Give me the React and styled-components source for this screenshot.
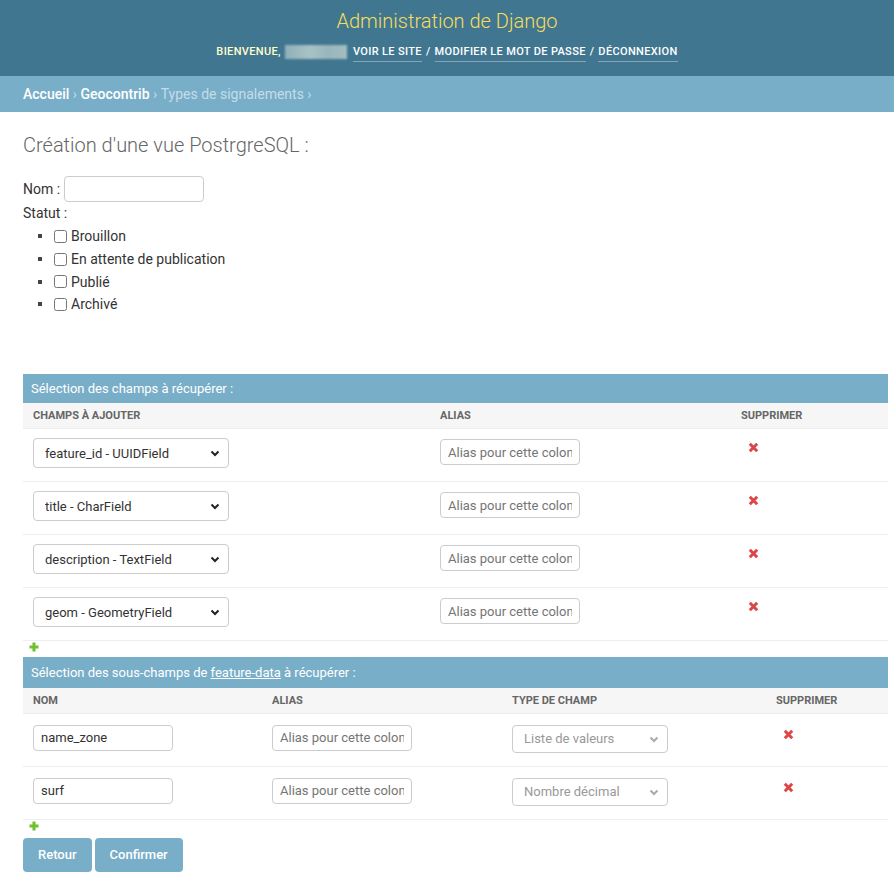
import React from 'react'
import styled, { createGlobalStyle } from 'styled-components'

const GlobalStyle = createGlobalStyle`
  body {
    margin: 0;
    font-family: Roboto, "Liberation Sans", Arial, sans-serif;
    font-size: 14px;
    color: #333;
    background: #fff;
  }
`

const Header = styled.div`
  height: 76px;
  box-sizing: border-box;
  background: #417690;
  padding-top: 9px;
  display: flex;
  flex-direction: column;
  align-items: center;
`

const Branding = styled.h1`
  margin: 0;
  font-size: 20px;
  line-height: 24px;
  font-weight: 300;
  color: #f5dd5d;
`

const UserTools = styled.div`
  margin-top: 9px;
  display: flex;
  align-items: center;
  font-size: 11px;
  letter-spacing: 0.35px;
  text-transform: uppercase;
  color: #ffc;
  font-weight: 500;
  line-height: 14px;
`

const BlurName = styled.span`
  display: inline-block;
  width: 62px;
  height: 14px;
  margin: 0 6px 0 4px;
  background: linear-gradient(90deg, #8fb0b8, #a9c3c4 40%, #98b5bb 70%, #a3bfc2);
  filter: blur(1px);
`

const ToolLink = styled.a`
  color: #fff;
  text-decoration: none;
  border-bottom: 1px solid rgba(255, 255, 255, 0.35);
  padding-bottom: 2px;
  margin-top: 3px;
`

const Sep = styled.span`
  color: #fff;
  margin: 0 4px;
`

const Breadcrumbs = styled.div`
  height: 36px;
  box-sizing: border-box;
  background: #79aec8;
  padding: 0 23px;
  display: flex;
  align-items: center;
  font-size: 14px;
  color: #c4dce8;
  a {
    color: #fff;
    text-decoration: none;
    font-weight: 500;
  }
`

const Content = styled.div`
  padding: 21px 6px 40px 23px;
`

const Title = styled.h1`
  margin: 0 0 19px;
  font-size: 20px;
  line-height: 24px;
  font-weight: 300;
  color: #666;
`

const FieldRow = styled.div`
  display: flex;
  align-items: center;
  gap: 4px;
`

const TextInput = styled.input`
  box-sizing: border-box;
  width: 140px;
  height: 26px;
  border: 1px solid #ccc;
  border-radius: 4px;
  padding: 0 7px;
  font-family: inherit;
  font-size: 13px;
  color: #333;
  outline: none;
  &::placeholder {
    color: #757575;
  }
`

const Label = styled.div`
  margin-top: 2px;
  line-height: 18px;
`

const StatusList = styled.ul`
  margin: 3px 0 0;
  padding-left: 15px;
  list-style: none;
  li {
    height: 22.7px;
    display: flex;
    align-items: center;
  }
  li::before {
    content: '';
    width: 4px;
    height: 4px;
    background: #444;
    margin-right: 12px;
  }
  label {
    display: inline-flex;
    align-items: center;
  }
  input {
    margin: 0 4px 0 0;
    width: 13px;
    height: 13px;
  }
`

const Module = styled.table`
  width: 865px;
  border-collapse: collapse;
  margin-top: ${p => p.$top || 0}px;
  caption {
    text-align: left;
    background: #79aec8;
    color: #fff;
    font-size: 13px;
    font-weight: 400;
    height: ${p => p.$capH}px;
    line-height: ${p => p.$capH}px;
    padding: 0 8px;
    a {
      color: #fff;
      text-decoration: underline;
    }
  }
  th {
    background: #f6f6f6;
    color: #666;
    font-size: 11px;
    font-weight: 700;
    text-transform: uppercase;
    text-align: left;
    height: ${p => p.$headH}px;
    padding: 0 10px;
    border-bottom: 1px solid #eee;
    box-sizing: border-box;
  }
  td {
    vertical-align: top;
    padding: ${p => p.$padTop}px 10px 0;
    height: 53px;
    box-sizing: border-box;
    border-bottom: 1px solid #eee;
  }
`

const SelectWrap = styled.div`
  position: relative;
  display: inline-block;
  width: ${p => p.$w}px;
  select {
    appearance: none;
    -webkit-appearance: none;
    box-sizing: border-box;
    width: 100%;
    height: ${p => p.$h}px;
    border: 1px solid #ccc;
    border-radius: 4px;
    background: #fff;
    padding: 0 24px 0 11px;
    font-family: inherit;
    font-size: 13px;
    color: ${p => (p.$muted ? '#999' : '#333')};
    outline: none;
  }
  svg {
    position: absolute;
    right: 9px;
    top: 50%;
    margin-top: -3px;
    pointer-events: none;
  }
`

const DeleteIcon = styled.span`
  display: inline-block;
  margin: 4px 0 0 7px;
  line-height: 0;
`

const AddRow = styled.div`
  height: 16px;
  box-sizing: border-box;
  padding: 1px 0 0 6px;
  line-height: 0;
`

const Buttons = styled.div`
  display: flex;
  gap: 3px;
  margin-top: 2px;
`

const Button = styled.button`
  height: 34px;
  border: none;
  border-radius: 4px;
  background: #79aec8;
  color: #fff;
  font-family: inherit;
  font-size: 13px;
  font-weight: 500;
  padding: 0 ${p => p.$px}px;
  cursor: pointer;
`

const Chevron = ({ color }) => (
  <svg width="10" height="7" viewBox="0 0 10 7">
    <path d="M1.5 1.5 L5 5 L8.5 1.5" fill="none" stroke={color} strokeWidth="2" />
  </svg>
)

const Cross = () => (
  <svg width="11" height="11" viewBox="0 0 11 11">
    <path d="M1.8 1.8 L9.2 9.2 M9.2 1.8 L1.8 9.2" stroke="#dd4646" strokeWidth="3" />
  </svg>
)

const Plus = () => (
  <svg width="10" height="10" viewBox="0 0 10 10">
    <path d="M5 0.5 V9.5 M0.5 5 H9.5" stroke="#70bf2b" strokeWidth="3" />
  </svg>
)

const Select = ({ value, w, h = 30, muted }) => (
  <SelectWrap $w={w} $h={h} $muted={muted}>
    <select defaultValue={value}>
      <option>{value}</option>
    </select>
    <Chevron color={muted ? '#aaa' : '#222'} />
  </SelectWrap>
)

const fields = [
  'feature_id - UUIDField',
  'title - CharField',
  'description - TextField',
  'geom - GeometryField',
]

const subFields = [
  { name: 'name_zone', type: 'Liste de valeurs' },
  { name: 'surf', type: 'Nombre décimal' },
]

export default function App() {
  return (
    <>
      <GlobalStyle />
      <Header>
        <Branding>Administration de Django</Branding>
        <UserTools>
          Bienvenue, <BlurName />
          <ToolLink>Voir le site</ToolLink>
          <Sep>/</Sep>
          <ToolLink>Modifier le mot de passe</ToolLink>
          <Sep>/</Sep>
          <ToolLink>Déconnexion</ToolLink>
        </UserTools>
      </Header>
      <Breadcrumbs>
        <a>Accueil</a>&nbsp;›&nbsp;<a>Geocontrib</a>&nbsp;›&nbsp;Types de signalements&nbsp;›
      </Breadcrumbs>
      <Content>
        <Title>Création d'une vue PostrgreSQL :</Title>
        <FieldRow>
          Nom : <TextInput />
        </FieldRow>
        <Label>Statut :</Label>
        <StatusList>
          {['Brouillon', 'En attente de publication', 'Publié', 'Archivé'].map(s => (
            <li key={s}>
              <label>
                <input type="checkbox" />
                {s}
              </label>
            </li>
          ))}
        </StatusList>

        <Module $top={58} $capH={29} $headH={26} $padTop={9}>
          <caption>Sélection des champs à récupérer :</caption>
          <colgroup>
            <col style={{ width: 407 }} />
            <col style={{ width: 301 }} />
            <col />
          </colgroup>
          <thead>
            <tr>
              <th>Champs à ajouter</th>
              <th>Alias</th>
              <th>Supprimer</th>
            </tr>
          </thead>
          <tbody>
            {fields.map(f => (
              <tr key={f}>
                <td>
                  <Select value={f} w={196} />
                </td>
                <td>
                  <TextInput placeholder="Alias pour cette colonne" style={{ marginTop: 1 }} />
                </td>
                <td>
                  <DeleteIcon>
                    <Cross />
                  </DeleteIcon>
                </td>
              </tr>
            ))}
          </tbody>
        </Module>
        <AddRow>
          <Plus />
        </AddRow>

        <Module $capH={31} $headH={25} $padTop={11}>
          <caption>
            Sélection des sous-champs de <a>feature-data</a> à récupérer :
          </caption>
          <colgroup>
            <col style={{ width: 239 }} />
            <col style={{ width: 240 }} />
            <col style={{ width: 264 }} />
            <col />
          </colgroup>
          <thead>
            <tr>
              <th>Nom</th>
              <th>Alias</th>
              <th>Type de champ</th>
              <th>Supprimer</th>
            </tr>
          </thead>
          <tbody>
            {subFields.map(s => (
              <tr key={s.name}>
                <td>
                  <TextInput defaultValue={s.name} />
                </td>
                <td>
                  <TextInput placeholder="Alias pour cette colonne" />
                </td>
                <td>
                  <Select value={s.type} w={156} h={28} muted />
                </td>
                <td>
                  <DeleteIcon>
                    <Cross />
                  </DeleteIcon>
                </td>
              </tr>
            ))}
          </tbody>
        </Module>
        <AddRow>
          <Plus />
        </AddRow>
        <Buttons>
          <Button $px={15}>Retour</Button>
          <Button $px={15}>Confirmer</Button>
        </Buttons>
      </Content>
    </>
  )
}
